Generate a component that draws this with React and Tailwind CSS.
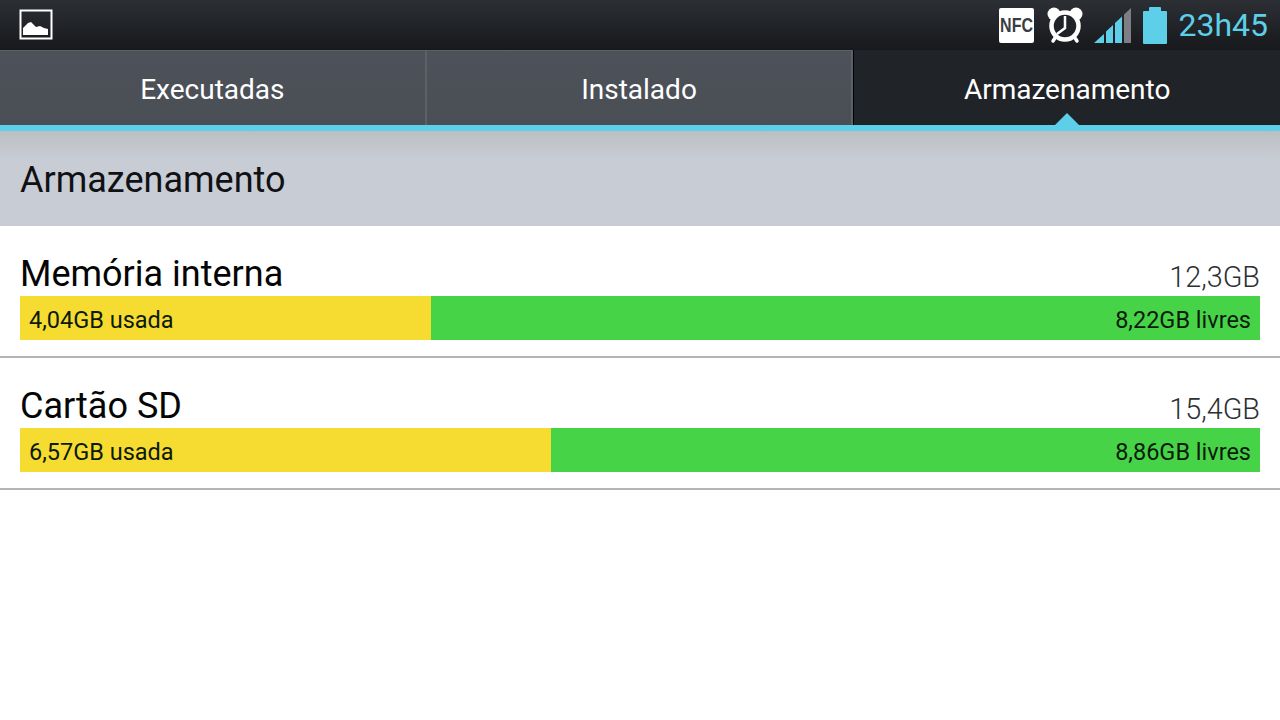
const StatusBar = () => {
  return (
    <div className="h-[50px] flex items-center justify-between bg-gradient-to-b from-[#2c2f34] to-[#17191c]">
      <svg className="ml-[19px] mb-[1px]" width="34" height="31" viewBox="0 0 34 31">
        <rect x="1.5" y="1.5" width="31" height="28" fill="none" stroke="#fff" strokeWidth="2" />
        <path d="M4 26 V19 L9 14 L12 13 L17 18 L21 17 L25 19 L29 20 V26 Z" fill="#fff" />
      </svg>
      <div className="flex items-center">
        <div className="w-[35px] h-[35px] bg-white rounded-[2px] flex items-center justify-center">
          <span className="inline-block text-[#3a3d42] text-[20px] font-bold scale-x-[0.8] font-['Liberation_Sans',sans-serif]">NFC</span>
        </div>
        <svg className="ml-[12px]" width="38" height="38" viewBox="0 0 38 38">
          <circle cx="8" cy="8" r="6.5" fill="#fff" />
          <circle cx="30" cy="8" r="6.5" fill="#fff" />
          <circle cx="19" cy="20" r="13.5" fill="#202327" stroke="#fff" strokeWidth="4.5" />
          <path d="M19 10 V22 L11 28" fill="none" stroke="#fff" strokeWidth="2.5" />
          <path d="M9 32 L7 35 M29 32 L31 35" stroke="#fff" strokeWidth="3.5" strokeLinecap="round" />
        </svg>
        <svg className="ml-[10px] mt-[1px]" width="38" height="36" viewBox="0 0 38 36">
          <path d="M0 35 L10 26 V35 Z" fill="#5dcfe9" />
          <path d="M12 23.5 L19 17 V35 H12 Z" fill="#5dcfe9" />
          <path d="M21 15 L28 8.5 V35 H21 Z" fill="#5dcfe9" />
          <path d="M30 6.5 L37 0 V35 H30 Z" fill="#7c7f83" />
        </svg>
        <div className="ml-[11px] flex flex-col items-center">
          <div className="w-[12px] h-[4px] bg-[#5dcfe9] rounded-t-[1px]" />
          <div className="w-[24px] h-[33px] bg-[#5dcfe9] rounded-[1px]" />
        </div>
        <span className="ml-[11px] mr-[12px] text-[#5dcfe9] text-[32px] leading-none font-['Roboto',sans-serif] font-normal">23h45</span>
      </div>
    </div>
  )
}

const Tab = ({ label, active }) => {
  return (
    <div className={active
      ? "relative flex items-center justify-center pt-[5px] bg-[#202327] border-l border-black text-white text-[28px]"
      : "flex items-center justify-center pt-[4px] bg-gradient-to-b from-[#4d5159] to-[#4a4e55] border-t border-r-2 border-t-[#5c6067] border-r-[#5c6067] text-white text-[28px]"}>
      {label}
      {active && (
        <div className="absolute bottom-0 left-1/2 -translate-x-1/2 w-0 h-0 border-x-[12px] border-x-transparent border-b-[12px] border-b-[#5dcfe9]" />
      )}
    </div>
  )
}

const StorageRow = ({ name, total, used, free, usedWidth }) => {
  return (
    <div className="h-[132px] px-5 border-b-2 border-[#b4b4b4] flex flex-col justify-end pb-[16px]">
      <div className="flex items-end justify-between h-[40px] pb-[2px]">
        <span className="text-[36px] leading-[40px] text-[#050505]">{name}</span>
        <span className="text-[28.8px] leading-[34px] text-[#2c2f33] font-light">{total}</span>
      </div>
      <div className="flex h-[44px] text-[23.5px] text-[#0c1a0a]">
        <div className="bg-[#f6dc31] flex items-center pl-[9px] pt-[5px]" style={{ width: usedWidth }}>{used}</div>
        <div className="flex-1 bg-[#47d348] flex items-center justify-end pr-[9px] pt-[5px]">{free}</div>
      </div>
    </div>
  )
}

export default function App() {
  return (
    <div className="w-[1280px] h-[720px] overflow-hidden bg-white font-['Roboto',sans-serif]">
      <StatusBar />
      <div className="grid grid-cols-3 h-[75px]">
        <Tab label="Executadas" />
        <Tab label="Instalado" />
        <Tab label="Armazenamento" active />
      </div>
      <div className="h-[6px] bg-[#5dcfe9]" />
      <div className="h-[95px] flex items-center px-5 pt-[3px] bg-gradient-to-b from-[#bcbfc2] via-[#c8ccd4] via-30% to-[#c8ccd4] text-[36px] text-[#101114]">
        Armazenamento
      </div>
      <StorageRow name="Memória interna" total="12,3GB" used="4,04GB usada" free="8,22GB livres" usedWidth={411} />
      <StorageRow name="Cartão SD" total="15,4GB" used="6,57GB usada" free="8,86GB livres" usedWidth={531} />
    </div>
  )
}
